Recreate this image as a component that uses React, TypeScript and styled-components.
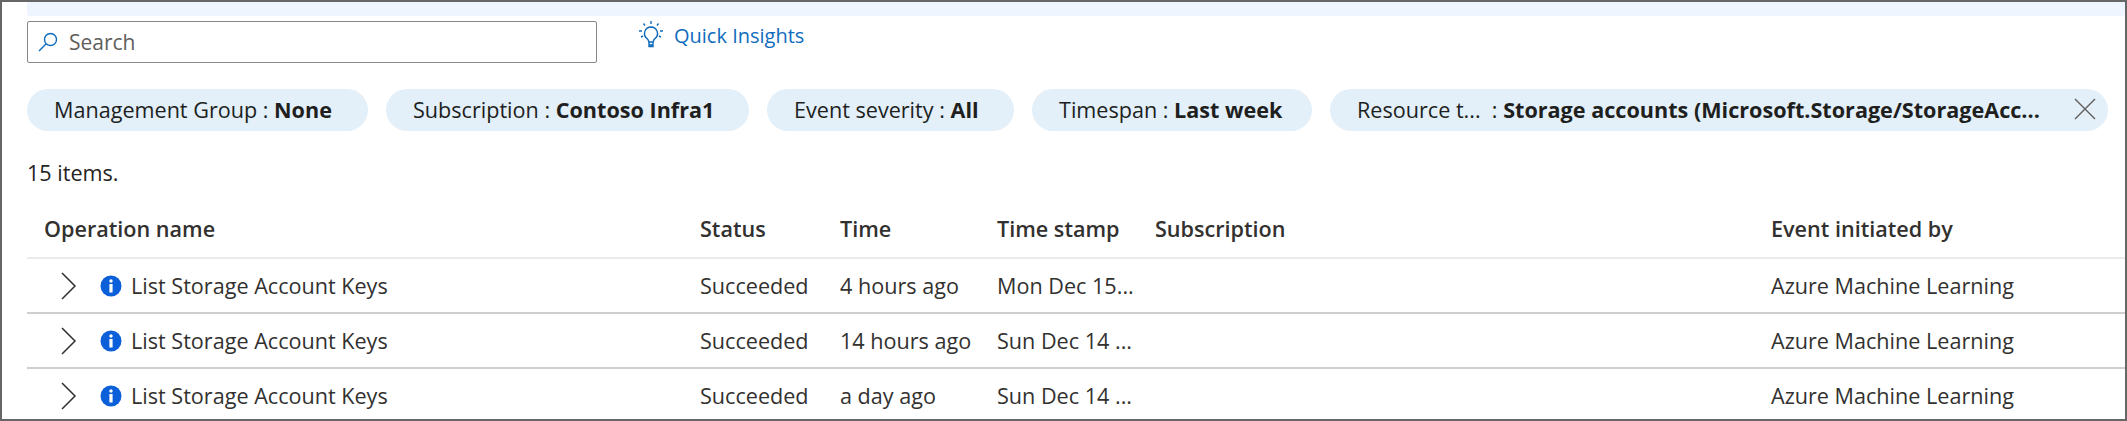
import React from 'react';
import styled, { createGlobalStyle } from 'styled-components';

const GlobalStyle = createGlobalStyle`
  html, body {
    margin: 0;
    padding: 0;
    background: #fff;
    overflow: hidden;
  }
`;

const Frame = styled.div`
  box-sizing: border-box;
  width: 2127px;
  height: 421px;
  border: 2px solid #666;
  overflow: hidden;
  background: #fff;
  padding: 0 0 0 25px;
  font-family: "Open Sans", "Noto Sans", sans-serif;
  font-size: 21.6px;
  color: #252423;
`;

const Band = styled.div`
  height: 14px;
  background: #eef5fe;
  border-radius: 0 0 3px 3px;
`;

const TopRow = styled.div`
  display: flex;
  align-items: flex-start;
  margin-top: 5px;
  height: 68px;
`;

const SearchBox = styled.div`
  box-sizing: border-box;
  width: 570px;
  height: 42px;
  border: 1px solid #8a8886;
  border-radius: 2px;
  display: flex;
  align-items: center;
  gap: 10px;
  padding-left: 9px;
  color: #605e5c;
  font-size: 21px;
`;

const Insights = styled.div`
  display: flex;
  align-items: center;
  gap: 10px;
  margin-left: 41px;
  margin-top: -2px;
  height: 32px;
  color: #0f6cbd;
  font-size: 20px;
`;

const PillRow = styled.div`
  display: flex;
  gap: 18px;
`;

const Pill = styled.div<{ $width: number }>`
  box-sizing: border-box;
  width: ${p => p.$width}px;
  height: 42px;
  border-radius: 21px;
  background: #e3eff9;
  display: flex;
  align-items: center;
  padding: 0 0 2px 27px;
  white-space: pre;
  color: #201f1e;

  b {
    font-weight: 700;
  }
`;

const Close = styled.svg`
  margin-left: auto;
  margin-right: 12px;
`;

const Count = styled.div`
  margin-top: 25px;
  height: 33px;
  line-height: 33px;
`;

const Table = styled.div`
  margin-top: 15px;
`;

const Row = styled.div<{ $head?: boolean }>`
  display: grid;
  grid-template-columns: 673px 140px 157px 158px 616px 1fr;
  height: 55px;
  align-items: center;
  box-sizing: border-box;
  padding-bottom: ${p => (p.$head ? 4 : 0)}px;
  border-bottom: 2px solid ${p => (p.$head ? '#edebe9' : '#cfcfcf')};
  font-weight: ${p => (p.$head ? 600 : 400)};
  color: #323130;
  white-space: nowrap;
`;

const NameHead = styled.div`
  padding-left: 17px;
`;

const NameCell = styled.div`
  display: flex;
  align-items: center;
  padding-left: 34px;
`;

const Chevron = styled.svg`
  margin-right: 23px;
`;

const Info = styled.svg`
  margin-right: 9px;
`;

const rows = [
  { time: '4 hours ago', stamp: 'Mon Dec 15...' },
  { time: '14 hours ago', stamp: 'Sun Dec 14 ...' },
  { time: 'a day ago', stamp: 'Sun Dec 14 ...' },
];

const App = () => {
  return (
    <Frame>
      <GlobalStyle />
      <Band />
      <TopRow>
        <SearchBox>
          <svg width="22" height="22" viewBox="0 0 22 22" fill="none" stroke="#0f6cbd" strokeWidth="1.4">
            <circle cx="13.5" cy="8.5" r="6" />
            <path d="M9.2 12.8 L2 20" />
          </svg>
          Search
        </SearchBox>
        <Insights>
          <svg width="26" height="30" viewBox="0 0 26 30" fill="none" stroke="#0f6cbd" strokeWidth="1.4">
            <path d="M13 7a6.5 6.5 0 0 0-4 11.6c1 .9 1.7 2 2 3.4h4c.3-1.400 1-2.500 2-3.400A6.500 6.500 0 0 0 13 7z" />
            <path d="M11 22v4.500h4V22M11 25h4" />
            <path d="M13 1v3M5.500 3.500l1.500 2M20.500 3.500l-1.500 2M1 11h3M22 11h3M3 17l2-1M23 17l-2-1" />
          </svg>
          Quick Insights
        </Insights>
      </TopRow>
      <PillRow>
        <Pill $width={341}>Management Group : <b>None</b></Pill>
        <Pill $width={363}>Subscription : <b>Contoso Infra1</b></Pill>
        <Pill $width={247}>Event severity : <b>All</b></Pill>
        <Pill $width={280}>Timespan : <b>Last week</b></Pill>
        <Pill $width={778}>
          Resource t...{'  '}: <b>Storage accounts (Microsoft.Storage/StorageAcc...</b>
          <Close width="22" height="22" viewBox="0 0 22 22" fill="none" stroke="#605e5c" strokeWidth="1.400">
            <path d="M1 1 L21 21 M21 1 L1 21" />
          </Close>
        </Pill>
      </PillRow>
      <Count>15 items.</Count>
      <Table>
        <Row $head>
          <NameHead>Operation name</NameHead>
          <div>Status</div>
          <div>Time</div>
          <div>Time stamp</div>
          <div>Subscription</div>
          <div>Event initiated by</div>
        </Row>
        {rows.map((r, i) => (
          <Row key={i}>
            <NameCell>
              <Chevron width="16" height="28" viewBox="0 0 16 28" fill="none" stroke="#323130" strokeWidth="1.500">
                <path d="M1 1 L14 14 L1 27" />
              </Chevron>
              <Info width="22" height="22" viewBox="0 0 22 22">
                <circle cx="11" cy="11" r="10.500" fill="#0b5fd8" />
                <circle cx="11" cy="6" r="1.700" fill="#fff" />
                <rect x="9.400" y="9" width="3.200" height="8.500" fill="#fff" />
              </Info>
              List Storage Account Keys
            </NameCell>
            <div>Succeeded</div>
            <div>{r.time}</div>
            <div>{r.stamp}</div>
            <div></div>
            <div>Azure Machine Learning</div>
          </Row>
        ))}
      </Table>
    </Frame>
  );
};

export default App;
